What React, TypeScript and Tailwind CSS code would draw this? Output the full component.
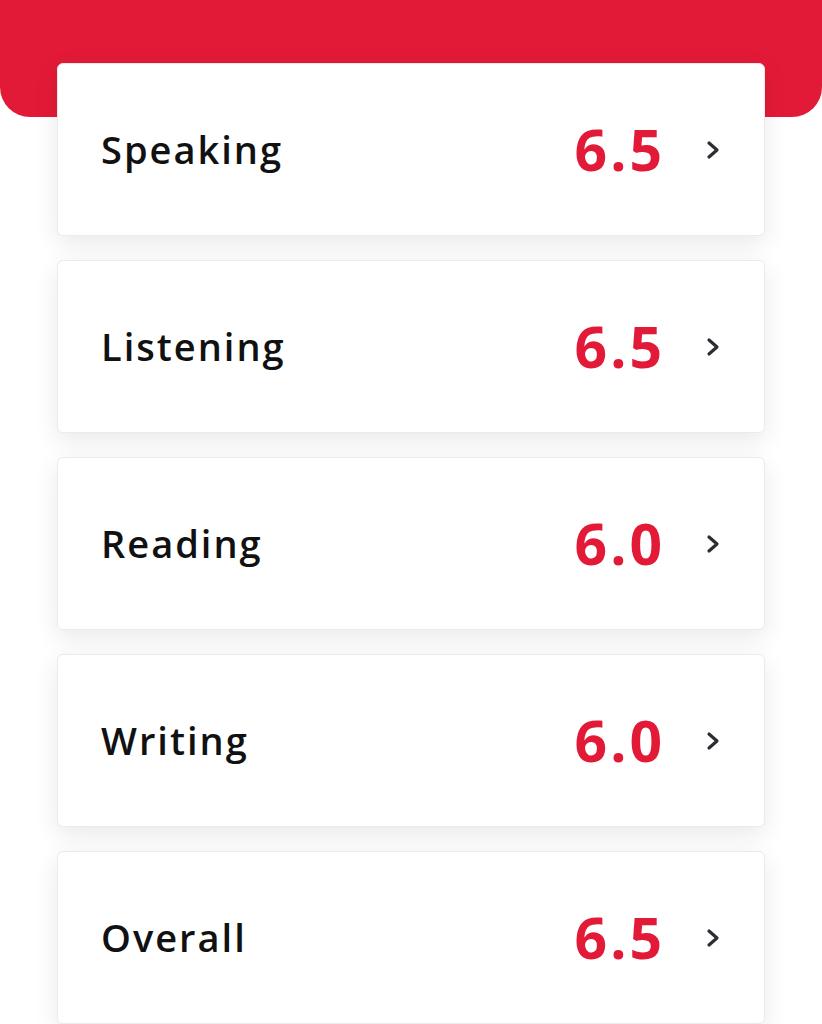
import React from "react";

const rows = [
  { label: "Speaking", score: "6.5" },
  { label: "Listening", score: "6.5" },
  { label: "Reading", score: "6.0" },
  { label: "Writing", score: "6.0" },
  { label: "Overall", score: "6.5" },
];

function Chevron() {
  return (
    <svg width="17" height="20" viewBox="0 0 17 20" className="ml-[39px] mr-[43px]">
      <path d="M5 3 L13 10 L5 17" fill="none" stroke="#2b2d33" strokeWidth="3.2" strokeLinecap="round" strokeLinejoin="round" />
    </svg>
  );
}

export default function App() {
  return (
    <div className="relative w-[822px] h-[1024px] overflow-hidden bg-white" style={{ fontFamily: "'Open Sans', 'Noto Sans', sans-serif" }}>
      <div className="absolute left-0 top-0 w-[822px] h-[117px] bg-[#e31a37] rounded-b-[30px]" />
      <div className="relative flex flex-col gap-[24px] pt-[63px] px-[57px]">
        {rows.map((r) => (
          <div
            key={r.label}
            className="flex items-center h-[173px] bg-white rounded-[6px] border border-[#ebebeb] shadow-[0_8px_26px_rgba(0,0,0,0.09)]"
          >
            <span className="pl-[43px] text-[38px] font-semibold text-[#111] tracking-[2px]">{r.label}</span>
            <span className="ml-auto text-[57px] font-bold text-[#e31a37] leading-none tracking-[3px]">{r.score}</span>
            <Chevron />
          </div>
        ))}
      </div>
    </div>
  );
}
